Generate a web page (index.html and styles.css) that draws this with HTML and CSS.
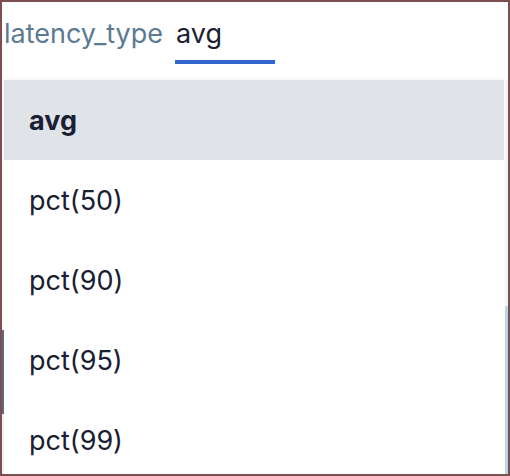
FILE: index.html
```html
<!DOCTYPE html>
<html lang="en">
<head>
<meta charset="utf-8">
<title>latency_type</title>
<link rel="stylesheet" href="styles.css">
</head>
<body>
<div class="frame">
  <div class="field">
    <span class="label">latency_type</span>
    <div class="input"><span class="value">avg</span></div>
  </div>
  <div class="body">
    <div class="edge-left"><span class="edge-a"></span><span class="edge-b"></span></div>
    <ul class="menu">
      <li class="item selected">avg</li>
      <li class="item">pct(50)</li>
      <li class="item">pct(90)</li>
      <li class="item">pct(95)</li>
      <li class="item">pct(99)</li>
    </ul>
    <div class="edge-right"><span class="track-a"></span><span class="track-b"></span></div>
  </div>
</div>
</body>
</html>
```
FILE: styles.css
```css
* { box-sizing: border-box; }
html, body { margin: 0; padding: 0; background: #ffffff; }
.frame {
  width: 510px;
  height: 476px;
  border: 2px solid #7b4f4f;
  overflow: hidden;
  display: flex;
  flex-direction: column;
  font-family: Inter, "Open Sans", sans-serif;
  background: #ffffff;
}
.field {
  height: 78px;
  display: flex;
  align-items: flex-start;
  padding: 16px 0 0 2px;
  gap: 12px;
  flex: none;
}
.label {
  font-size: 27px;
  color: #5b7a93;
  line-height: 32px;
}
.input {
  width: 100px;
  height: 46px;
  border-bottom: 4px solid #3068d0;
  padding-left: 1px;
}
.value {
  font-size: 27px;
  color: #1a2133;
  line-height: 32px;
}
.body {
  flex: 1;
  display: flex;
  min-height: 0;
}
.edge-left {
  width: 2px;
  display: flex;
  flex-direction: column;
  padding-top: 250px;
}
.edge-a { height: 84px; background: #5a6b82; }
.edge-b { height: 60px; background: #eef1f4; }
.menu {
  list-style: none;
  margin: 0;
  padding: 0;
  width: 500px;
  box-shadow: 0 -2px 2px rgba(0,0,0,0.03);
}
.item {
  height: 80px;
  display: flex;
  align-items: center;
  padding-left: 25px;
  padding-top: 1px;
  font-size: 27px;
  color: #182033;
}
.item.selected {
  background: #e0e3e8;
  font-weight: 700;
}
.edge-right {
  width: 4px;
  display: flex;
  flex-direction: column;
  padding-left: 1px;
}
.track-a { height: 226px; background: #f4f4f4; }
.track-b { flex: 1; background: #b9d5e8; }
```
